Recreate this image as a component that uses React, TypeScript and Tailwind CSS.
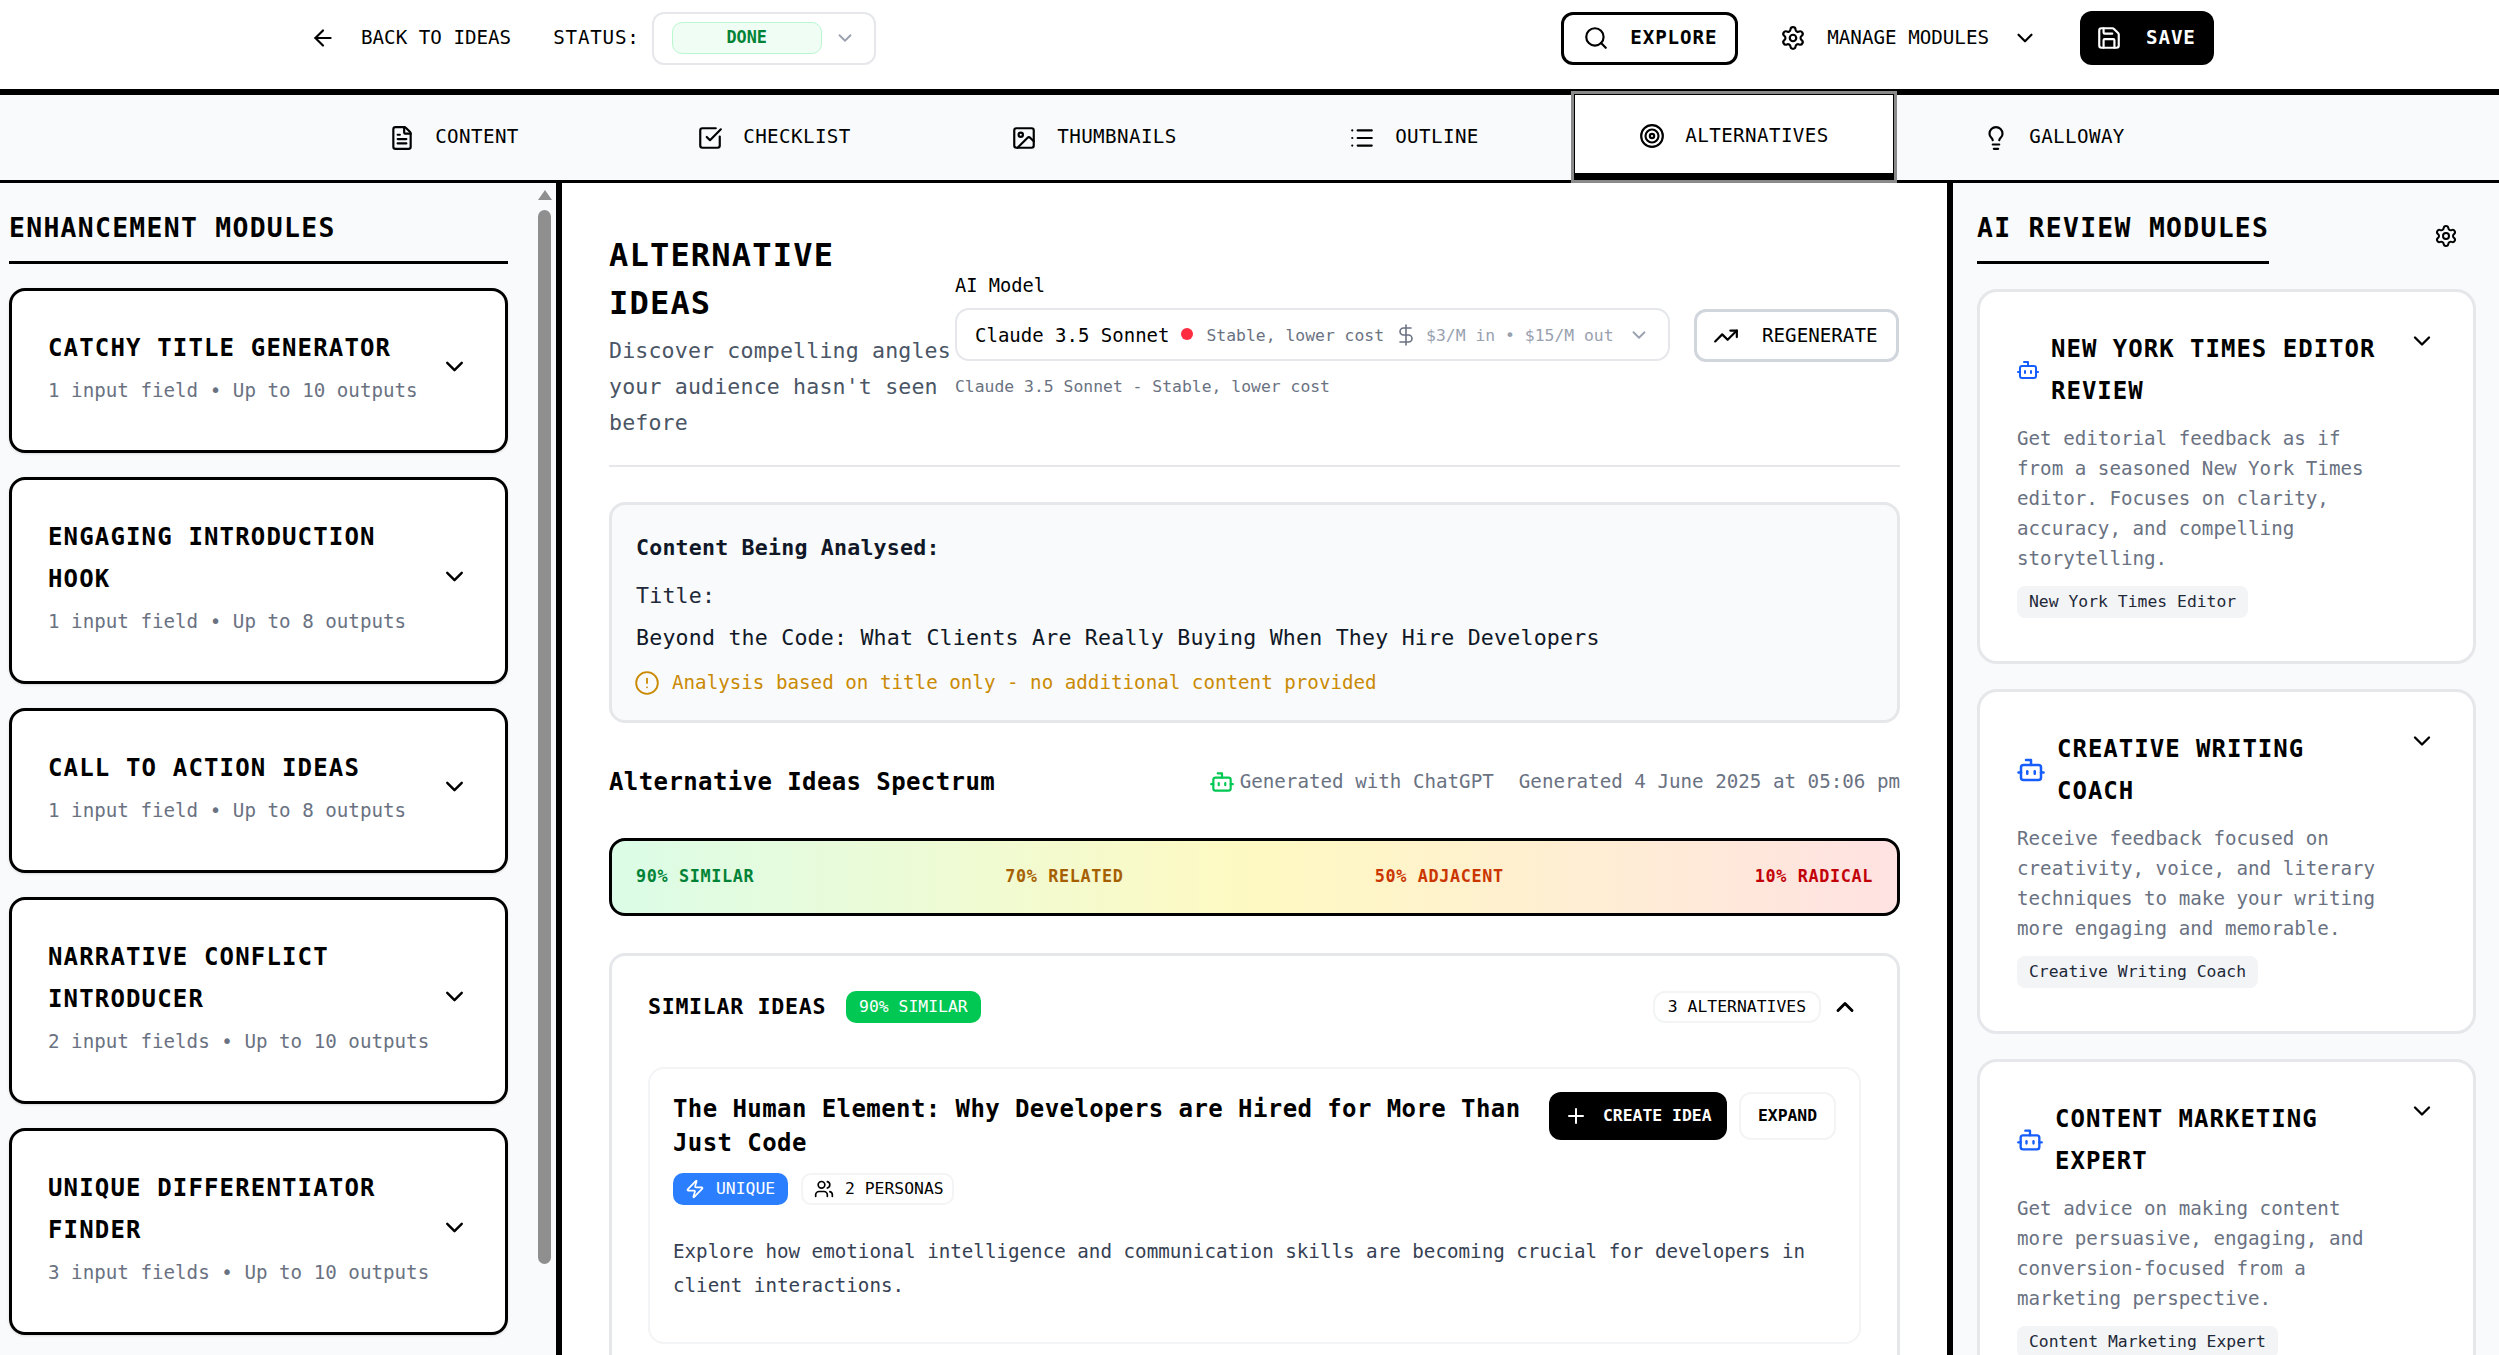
import { ArrowLeft, Bot, ChevronDown, ChevronUp, CircleAlert, DollarSign, FileText, Image, Lightbulb, List, Plus, Save, Search, Settings, SquareCheckBig, Target, TrendingUp, Users, Zap } from 'lucide-react'

const tabs = [
  { label: 'CONTENT', icon: FileText },
  { label: 'CHECKLIST', icon: SquareCheckBig },
  { label: 'THUMBNAILS', icon: Image },
  { label: 'OUTLINE', icon: List },
  { label: 'ALTERNATIVES', icon: Target, active: true },
  { label: 'GALLOWAY', icon: Lightbulb },
]

const enhancementModules = [
  { title: 'CATCHY TITLE GENERATOR', meta: '1 input field • Up to 10 outputs' },
  { title: 'ENGAGING INTRODUCTION HOOK', meta: '1 input field • Up to 8 outputs' },
  { title: 'CALL TO ACTION IDEAS', meta: '1 input field • Up to 8 outputs' },
  { title: 'NARRATIVE CONFLICT INTRODUCER', meta: '2 input fields • Up to 10 outputs' },
  { title: 'UNIQUE DIFFERENTIATOR FINDER', meta: '3 input fields • Up to 10 outputs' },
]

const reviewModules = [
  {
    title: 'NEW YORK TIMES EDITOR REVIEW',
    text: 'Get editorial feedback as if from a seasoned New York Times editor. Focuses on clarity, accuracy, and compelling storytelling.',
    tag: 'New York Times Editor',
    iconClass: 'w-[24px] h-[24px]',
  },
  {
    title: 'CREATIVE WRITING COACH',
    text: 'Receive feedback focused on creativity, voice, and literary techniques to make your writing more engaging and memorable.',
    tag: 'Creative Writing Coach',
    iconClass: 'w-[30px] h-[30px]',
  },
  {
    title: 'CONTENT MARKETING EXPERT',
    text: 'Get advice on making content more persuasive, engaging, and conversion-focused from a marketing perspective.',
    tag: 'Content Marketing Expert',
    iconClass: 'w-[28px] h-[28px]',
  },
]

export default function App() {
  return (
    <div className="h-[1355px] overflow-hidden bg-white text-black font-['DejaVu_Sans_Mono',monospace]">
      {/* Top bar */}
      <header className="h-[95px] border-b-[6px] border-black">
        <div className="ml-[294px] w-[1920px] pt-[11px] flex items-center justify-between">
          <div className="flex items-center pl-[16px]">
            <ArrowLeft className="w-[26px] h-[26px]" strokeWidth={2} />
            <span className="ml-[25px] text-[19.2px] whitespace-nowrap">BACK TO IDEAS</span>
            <span className="ml-[42px] text-[19.2px] tracking-[0.8px]">STATUS:</span>
            <div className="ml-[12px] w-[224px] h-[53px] flex items-center pl-[18px] border-2 border-gray-200 rounded-xl">
              <span className="w-[150px] h-[32px] flex items-center justify-center bg-green-50 border border-green-200 rounded-[10px] text-[16.8px] font-bold text-green-700">DONE</span>
              <ChevronDown className="ml-[12px] w-[22px] h-[22px] text-gray-400" />
            </div>
          </div>
          <div className="flex items-center">
            <button className="w-[177px] h-[53px] flex items-center pl-[19px] border-[3px] border-black rounded-xl bg-white">
              <Search className="w-[26px] h-[26px]" />
              <span className="ml-[21px] text-[19.2px] font-bold tracking-[0.9px]">EXPLORE</span>
            </button>
            <Settings className="ml-[42px] w-[26px] h-[26px]" />
            <span className="ml-[21px] text-[19.2px] whitespace-nowrap">MANAGE MODULES</span>
            <ChevronDown className="ml-[23px] w-[26px] h-[26px]" />
            <button className="ml-[42px] w-[134px] h-[54px] flex items-center pl-[16px] bg-black text-white rounded-xl">
              <Save className="w-[26px] h-[26px]" />
              <span className="ml-[24px] text-[19.2px] font-bold tracking-[0.9px]">SAVE</span>
            </button>
          </div>
        </div>
      </header>

      {/* Tabs */}
      <nav className="h-[88px] bg-gray-50 border-b-[3px] border-black">
        <div className="ml-[294px] w-[1920px] h-[85px] flex">
          {tabs.map(({ label, icon: Icon, active }) => (
            active ? (
              <div key={label} className="relative z-10 -mt-[1px] h-[86px] w-[320px] flex items-center justify-center gap-[20px] bg-white pt-[4px] outline-[3px] outline-[#8a8a8a] border border-black border-b-[7px]">
                <Icon className="w-[26px] h-[26px]" />
                <span className="text-[19.2px] tracking-[0.4px]">{label}</span>
              </div>
            ) : (
              <div key={label} className="w-[320px] flex items-center justify-center gap-[20px]">
                <Icon className="w-[26px] h-[26px]" />
                <span className="text-[19.2px] tracking-[0.4px]">{label}</span>
              </div>
            )
          ))}
        </div>
      </nav>

      <div className="flex h-[1172px]">
        {/* Enhancement modules */}
        <aside className="relative w-[562px] shrink-0 bg-gray-50 border-r-[6px] border-black overflow-hidden pl-[9px]">
          <div className="w-[499px]">
            <h2 className="pt-[24px] pb-[12px] text-[26.4px] leading-[42px] font-bold tracking-[1.3px] border-b-[3px] border-black whitespace-nowrap">ENHANCEMENT MODULES</h2>
            <div className="mt-[24px] flex flex-col gap-[24px]">
              {enhancementModules.map((m) => (
                <div key={m.title} className="flex items-center pl-[36px] pr-[36px] pt-[36px] pb-[44px] bg-white border-[3px] border-black rounded-2xl shadow-sm">
                  <div className="flex-1">
                    <h3 className="text-[24px] leading-[42px] font-bold tracking-[1.15px]">{m.title}</h3>
                    <p className="mt-[7px] text-[19.2px] leading-[30px] text-gray-500 whitespace-nowrap">{m.meta}</p>
                  </div>
                  <ChevronDown className="w-[29px] h-[29px] shrink-0" />
                </div>
              ))}
            </div>
          </div>
          {/* Scrollbar */}
          <div className="absolute top-[7px] right-[5px] w-[13px] flex flex-col items-center">
            <div className="w-0 h-0 border-l-[7px] border-r-[7px] border-b-[10px] border-l-transparent border-r-transparent border-b-[#8f8f8f]" />
            <div className="mt-[10px] w-[13px] h-[1054px] rounded-full bg-[#8f8f8f]" />
          </div>
        </aside>

        {/* Main */}
        <main className="flex-1 min-w-0 px-[47px] pt-[48px] overflow-hidden">
          <div className="flex pb-[24px] border-b-2 border-gray-200">
            <div className="w-[346px] shrink-0">
              <h1 className="text-[32px] leading-[48px] font-bold tracking-[1.2px]">ALTERNATIVE IDEAS</h1>
              <p className="mt-[6px] text-[21.6px] leading-[36px] text-gray-600 tracking-[0.15px]">Discover compelling angles your audience hasn't seen before</p>
            </div>
            <div className="w-[715px] shrink-0 pt-[43px]">
              <label className="block text-[18.7px] leading-[24px]">AI Model</label>
              <div className="mt-[10px] h-[53px] flex items-center pl-[18px] border-2 border-gray-200 rounded-[14px] bg-white whitespace-nowrap">
                <span className="text-[19px] font-medium mt-[1px]">Claude 3.5 Sonnet</span>
                <span className="ml-[12px] w-[12px] h-[12px] rounded-full bg-[#ff2d3f] -mt-[2px]" />
                <span className="ml-[13px] text-[16.4px] text-gray-500 mt-[3px]">Stable, lower cost</span>
                <DollarSign className="ml-[10px] w-[24px] h-[24px] text-gray-500" strokeWidth={1.6} />
                <span className="ml-[8px] text-[16.4px] text-gray-400 mt-[3px]">$3/M in • $15/M out</span>
                <ChevronDown className="ml-[14px] w-[22px] h-[22px] text-gray-400" />
              </div>
              <p className="mt-[14px] text-[16.4px] leading-[24px] text-gray-500 whitespace-nowrap">Claude 3.5 Sonnet - Stable, lower cost</p>
            </div>
            <div className="ml-[24px] pt-[78px]">
              <button className="w-[205px] h-[53px] flex items-center pl-[16px] pt-[1px] bg-white border-[3px] border-gray-300 rounded-xl">
                <TrendingUp className="w-[26px] h-[26px]" />
                <span className="ml-[23px] text-[19.2px] whitespace-nowrap">REGENERATE</span>
              </button>
            </div>
          </div>

          <section className="mt-[35px] pl-[24px] pr-[24px] pt-[25px] pb-[22px] bg-gray-50 border-[3px] border-gray-200 rounded-2xl">
            <h3 className="text-[21.6px] leading-[36px] font-bold text-gray-900 tracking-[0.2px]">Content Being Analysed:</h3>
            <p className="mt-[12px] text-[21.6px] leading-[36px] text-gray-800 tracking-[0.2px]">Title:</p>
            <p className="mt-[6px] text-[21.6px] leading-[36px] text-gray-900 tracking-[0.2px]">Beyond the Code: What Clients Are Really Buying When They Hire Developers</p>
            <div className="mt-[12px] flex items-center gap-[12px] text-[#ca8a04]">
              <CircleAlert className="-ml-[2px] w-[26px] h-[26px]" strokeWidth={1.7} />
              <span className="text-[19.2px] leading-[30px]">Analysis based on title only - no additional content provided</span>
            </div>
          </section>

          <div className="mt-[41px] flex items-center justify-between">
            <h2 className="text-[24px] leading-[36px] font-bold tracking-[0.4px]">Alternative Ideas Spectrum</h2>
            <div className="flex items-center text-[19.2px] text-gray-500">
              <Bot className="w-[26px] h-[26px] text-[#00c853]" />
              <span className="ml-[5px]">Generated with ChatGPT</span>
              <span className="ml-[25px]">Generated 4 June 2025 at 05:06 pm</span>
            </div>
          </div>

          <div className="mt-[38px] h-[78px] flex items-center justify-between px-[24px] border-[3px] border-black rounded-2xl bg-gradient-to-r from-green-100 via-yellow-100 to-red-100 text-[16.8px] font-bold tracking-[0.65px]">
            <span className="text-green-700">90% SIMILAR</span>
            <span className="text-yellow-700">70% RELATED</span>
            <span className="text-orange-700">50% ADJACENT</span>
            <span className="text-red-700">10% RADICAL</span>
          </div>

          <section className="mt-[37px] px-[36px] pt-[35px] pb-[40px] border-[3px] border-gray-200 rounded-2xl bg-white">
            <div className="flex items-center">
              <h3 className="text-[21.6px] font-bold tracking-[0.7px] whitespace-nowrap">SIMILAR IDEAS</h3>
              <span className="ml-[20px] h-[32px] flex items-center px-[13px] bg-[#00c853] text-white text-[16.4px] rounded-[10px]">90% SIMILAR</span>
              <span className="ml-auto h-[32px] flex items-center px-[13px] border-2 border-gray-100 text-[16.4px] rounded-xl">3 ALTERNATIVES</span>
              <ChevronUp className="ml-[10px] mr-[2px] w-[28px] h-[28px]" strokeWidth={2.5} />
            </div>

            <article className="mt-[44px] pl-[23px] pr-[23px] pt-[23px] pb-[39px] border-2 border-gray-100 rounded-2xl">
              <div className="flex items-start">
                <h4 className="flex-1 pr-[20px] text-[24px] leading-[34px] font-bold tracking-[0.42px]">The Human Element: Why Developers are Hired for More Than Just Code</h4>
                <button className="w-[178px] h-[48px] flex items-center pl-[15px] bg-black text-white rounded-xl">
                  <Plus className="w-[24px] h-[24px]" />
                  <span className="ml-[15px] text-[16.4px] font-bold whitespace-nowrap">CREATE IDEA</span>
                </button>
                <button className="ml-[12px] w-[97px] h-[48px] bg-white border-2 border-gray-100 rounded-xl text-[16.4px] font-bold">EXPAND</button>
              </div>
              <div className="mt-[13px] flex items-center gap-[13px]">
                <span className="h-[32px] w-[115px] flex items-center pl-[12px] bg-blue-500 text-white rounded-[10px] text-[16.4px]">
                  <Zap className="w-[20px] h-[20px]" />
                  <span className="ml-[11px]">UNIQUE</span>
                </span>
                <span className="h-[32px] w-[153px] flex items-center pl-[11px] border-2 border-gray-100 rounded-[10px] text-[16.4px]">
                  <Users className="w-[20px] h-[20px]" />
                  <span className="ml-[11px] whitespace-nowrap">2 PERSONAS</span>
                </span>
              </div>
              <p className="mt-[30px] text-[19.2px] leading-[34px] text-gray-700">Explore how emotional intelligence and communication skills are becoming crucial for developers in client interactions.</p>
            </article>
          </section>
        </main>

        {/* AI review modules */}
        <aside className="w-[552px] shrink-0 bg-gray-50 border-l-[6px] border-black pl-[24px] pr-[23px] overflow-hidden">
          <div className="flex items-start justify-between">
            <h2 className="mt-[24px] pb-[12px] text-[26.4px] leading-[42px] font-bold tracking-[1.3px] border-b-[3px] border-black whitespace-nowrap">AI REVIEW MODULES</h2>
            <Settings className="mt-[41px] mr-[18px] w-[24px] h-[24px]" />
          </div>
          <div className="mt-[25px] flex flex-col gap-[25px]">
            {reviewModules.map((m) => (
              <div key={m.title} className="shrink-0 pl-[37px] pr-[37px] pt-[36px] pb-[43px] bg-white border-[3px] border-gray-200 rounded-[20px]">
                <div className="flex items-start">
                  <div className="flex-1 flex items-center gap-[11px]">
                    <Bot className={`${m.iconClass} shrink-0 -ml-[1px] text-blue-600`} />
                    <h3 className="max-w-[335px] text-[24px] leading-[42px] font-bold tracking-[1px]">{m.title}</h3>
                  </div>
                  <ChevronDown className="w-[28px] h-[28px] shrink-0 mt-[-1px]" />
                </div>
                <p className="mt-[12px] max-w-[370px] text-[19.2px] leading-[30px] text-gray-500">{m.text}</p>
                <span className="mt-[12px] flex w-fit h-[32px] items-center px-[12px] bg-gray-100 rounded-lg text-[16.4px] text-gray-800 whitespace-nowrap">{m.tag}</span>
              </div>
            ))}
          </div>
        </aside>
      </div>
    </div>
  )
}
